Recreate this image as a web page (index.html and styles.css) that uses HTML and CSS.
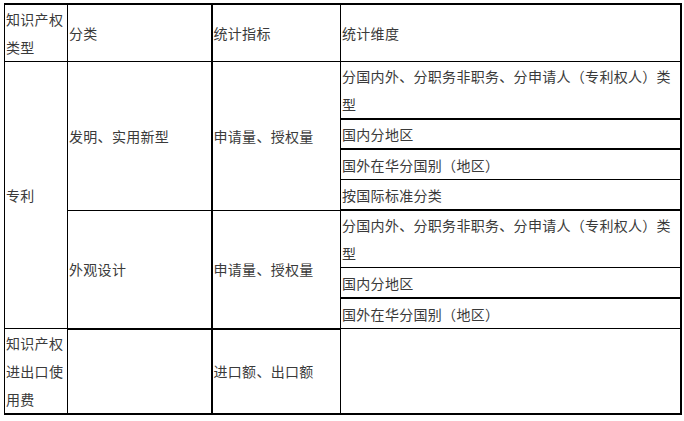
FILE: index.html
```html
<!DOCTYPE html>
<html lang="zh">
<head>
<meta charset="utf-8">
<link rel="stylesheet" href="styles.css">
</head>
<body>
<table class="stats">
  <colgroup>
    <col class="c1"><col class="c2"><col class="c3"><col class="c4">
  </colgroup>
  <tr>
    <td class="a">知识产权类型</td>
    <td class="b">分类</td>
    <td class="c">统计指标</td>
    <td class="d">统计维度</td>
  </tr>
  <tr>
    <td class="a" rowspan="7">专利</td>
    <td class="b" rowspan="4">发明、实用新型</td>
    <td class="c" rowspan="4">申请量、授权量</td>
    <td class="d thick">分国内外、分职务非职务、分申请人（专利权人）类型</td>
  </tr>
  <tr><td class="d thick">国内分地区</td></tr>
  <tr><td class="d one">国外在华分国别（地区）</td></tr>
  <tr><td class="d thick one">按国际标准分类</td></tr>
  <tr>
    <td class="b thick" rowspan="3">外观设计</td>
    <td class="c thick" rowspan="3">申请量、授权量</td>
    <td class="d">分国内外、分职务非职务、分申请人（专利权人）类型</td>
  </tr>
  <tr><td class="d thick one">国内分地区</td></tr>
  <tr><td class="d one">国外在华分国别（地区）</td></tr>
  <tr>
    <td class="a last">知识产权进出口使用费</td>
    <td class="b last"></td>
    <td class="c last">进口额、出口额</td>
    <td class="d last"></td>
  </tr>
</table>
</body>
</html>
```
FILE: styles.css
```css
html, body {
  margin: 0;
  padding: 0;
  background: #ffffff;
}
body {
  padding: 3px 0 0 4px;
  font-family: "Noto Sans CJK SC", "Noto Sans", sans-serif;
  font-size: 14px;
  color: #3a3a3a;
}
.stats {
  border-collapse: collapse;
  table-layout: fixed;
  width: 676px;
  border-top: 2px solid #000;
  border-right: 2px solid #000;
  border-left: 1px solid #000;
}
.c1 { width: 63px; }
.c2 { width: 144px; }
.c3 { width: 129px; }
.c4 { width: 340px; }
.stats td {
  padding: 0 0 0 1px;
  line-height: 28px;
  letter-spacing: 0.3px;
  vertical-align: middle;
  text-align: left;
  border: 1px solid #000;
  word-break: break-all;
}
.stats td.one { padding-top: 1px; }
.stats td.b { border-right: 2px solid #000; }
.stats td.thick { border-bottom: 2px solid #000; }
.stats td.last { border-bottom: 2px solid #000; }
.stats td.b.last { border-right: 2px solid #000; }
```
